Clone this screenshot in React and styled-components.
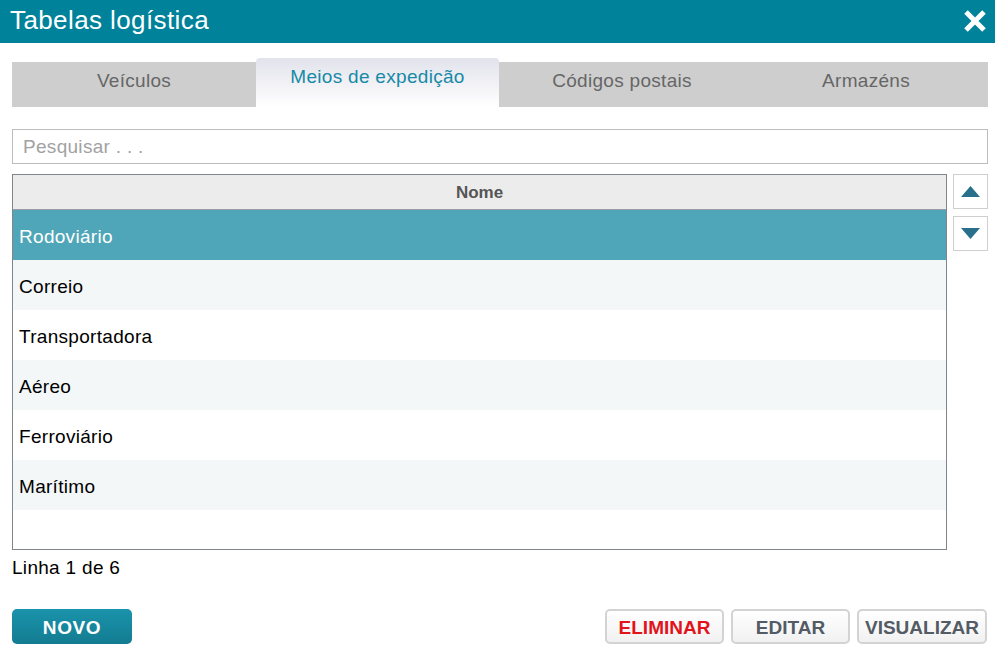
import React, { useState } from "react";
import styled, { createGlobalStyle } from "styled-components";

const GlobalStyle = createGlobalStyle`
  html, body {
    margin: 0;
    padding: 0;
    background: #ffffff;
  }
  body {
    font-family: "Liberation Sans", Arial, sans-serif;
    color: #000;
  }
  * { box-sizing: border-box; }
`;

const Dialog = styled.div`
  width: 995px;
  height: 656px;
  background: #fff;
  display: flex;
  flex-direction: column;
`;

const TitleBar = styled.header`
  height: 43px;
  flex: none;
  background: #00829a;
  display: flex;
  align-items: flex-start;
  justify-content: space-between;
  padding: 0 8px 0 10px;
`;

const Title = styled.h1`
  margin: 0;
  font-size: 26px;
  line-height: 40px;
  font-weight: 400;
  color: #fff;
  letter-spacing: 0.4px;
`;

const CloseButton = styled.button`
  margin-top: 9px;
  width: 24px;
  height: 24px;
  padding: 0;
  border: 0;
  background: none;
  cursor: pointer;
  display: flex;
  svg { display: block; }
`;

const Body = styled.div`
  flex: 1;
  display: flex;
  flex-direction: column;
  padding: 0 7px 0 12px;
`;

const TabBar = styled.nav`
  margin-top: 15px;
  height: 49px;
  display: grid;
  grid-template-columns: repeat(4, 1fr);
  align-items: end;
  background: linear-gradient(to bottom, transparent 4px, #cecece 4px);
`;

const Tab = styled.button`
  height: ${(p) => (p.$active ? "49px" : "45px")};
  border: 0;
  margin: 0 ${(p) => (p.$active ? "1px" : "0")} 0 0;
  padding: 8px 0 0;
  border-radius: ${(p) => (p.$active ? "4px 4px 0 0" : "0")};
  background: ${(p) =>
    p.$active ? "linear-gradient(to bottom, #e2e2ec 0%, #ffffff 100%)" : "#cecece"};
  color: ${(p) => (p.$active ? "#168aa6" : "#666666")};
  font-family: inherit;
  font-size: 19px;
  line-height: 22px;
  letter-spacing: 0.3px;
  align-self: end;
  display: flex;
  justify-content: center;
  align-items: flex-start;
  cursor: pointer;
`;

const Search = styled.input`
  margin-top: 22px;
  height: 35px;
  width: 100%;
  border: 1px solid #bdbdbd;
  padding: 0 10px;
  font-family: inherit;
  font-size: 19px;
  letter-spacing: 0.3px;
  color: #333;
  outline: none;
  &::placeholder { color: #a2a2a2; }
`;

const GridArea = styled.div`
  margin-top: 10px;
  display: flex;
  align-items: flex-start;
  gap: 6px;
`;

const Table = styled.div`
  width: 935px;
  height: 376px;
  border: 1px solid #80858c;
  display: flex;
  flex-direction: column;
  background: #fff;
`;

const HeadCell = styled.div`
  height: 35px;
  flex: none;
  padding-top: 2px;
  background: #ececec;
  border-bottom: 1px solid #9a9ea4;
  display: flex;
  align-items: center;
  justify-content: center;
  font-size: 17px;
  font-weight: 700;
  color: #555;
`;

const Row = styled.div`
  height: 50px;
  flex: none;
  display: flex;
  align-items: center;
  padding: 4px 0 0 6px;
  font-size: 19px;
  letter-spacing: 0.3px;
  cursor: pointer;
  background: ${(p) => (p.$selected ? "#4fa6b8" : p.$odd ? "#f3f7f8" : "#ffffff")};
  color: ${(p) => (p.$selected ? "#ffffff" : "#000000")};
`;

const Scroller = styled.div`
  display: flex;
  flex-direction: column;
  gap: 7px;
`;

const ScrollButton = styled.button`
  width: 35px;
  height: 35px;
  padding: 0;
  border: 1px solid #cfcfcf;
  background: #fff;
  display: flex;
  align-items: center;
  justify-content: center;
  cursor: pointer;
`;

const Status = styled.div`
  margin-top: 7px;
  font-size: 19px;
  line-height: 22px;
  letter-spacing: 0.3px;
`;

const Actions = styled.div`
  margin-top: 30px;
  margin-right: 1px;
  display: flex;
  align-items: center;
  gap: 7px;
`;

const Spacer = styled.div`
  flex: 1;
`;

const PrimaryButton = styled.button`
  width: 120px;
  height: 35px;
  border: 0;
  padding: 2px 0 0;
  border-radius: 5px;
  background: linear-gradient(to bottom, #1a93ab 0%, #137c91 100%);
  color: #fff;
  font-family: inherit;
  font-size: 19px;
  font-weight: 700;
  letter-spacing: 0.6px;
  cursor: pointer;
`;

const SecondaryButton = styled.button`
  min-width: 119px;
  height: 35px;
  padding: 2px 6px 0;
  border: 2px solid #d3d3d3;
  border-radius: 5px;
  background: linear-gradient(to bottom, #ffffff 0%, #f1f1f1 100%);
  color: ${(p) => (p.$danger ? "#e2141b" : "#535b64")};
  font-family: inherit;
  font-size: 19px;
  font-weight: 700;
  cursor: pointer;
`;

const tabs = ["Veículos", "Meios de expedição", "Códigos postais", "Armazéns"];
const rows = ["Rodoviário", "Correio", "Transportadora", "Aéreo", "Ferroviário", "Marítimo"];

export default function App() {
  const [tab, setTab] = useState(1);
  const [selected, setSelected] = useState(0);

  return (
    <>
      <GlobalStyle />
      <Dialog>
        <TitleBar>
          <Title>Tabelas logística</Title>
          <CloseButton aria-label="Fechar">
            <svg width="24" height="24" viewBox="0 0 24 24">
              <path d="M3 3 L21 21 M21 3 L3 21" stroke="#fff" strokeWidth="5" strokeLinecap="butt" />
            </svg>
          </CloseButton>
        </TitleBar>
        <Body>
          <TabBar>
            {tabs.map((t, i) => (
              <Tab key={t} $active={i === tab} onClick={() => setTab(i)}>
                {t}
              </Tab>
            ))}
          </TabBar>
          <Search placeholder="Pesquisar . . ." />
          <GridArea>
            <Table>
              <HeadCell>Nome</HeadCell>
              {rows.map((r, i) => (
                <Row key={r} $selected={i === selected} $odd={i % 2 === 1} onClick={() => setSelected(i)}>
                  {r}
                </Row>
              ))}
            </Table>
            <Scroller>
              <ScrollButton aria-label="Subir">
                <svg width="19" height="11" viewBox="0 0 19 11">
                  <path d="M9.5 0 L19 11 L0 11 Z" fill="#286f8c" />
                </svg>
              </ScrollButton>
              <ScrollButton aria-label="Descer">
                <svg width="19" height="11" viewBox="0 0 19 11">
                  <path d="M0 0 L19 0 L9.5 11 Z" fill="#286f8c" />
                </svg>
              </ScrollButton>
            </Scroller>
          </GridArea>
          <Status>Linha {selected + 1} de {rows.length}</Status>
          <Actions>
            <PrimaryButton>NOVO</PrimaryButton>
            <Spacer />
            <SecondaryButton $danger>ELIMINAR</SecondaryButton>
            <SecondaryButton>EDITAR</SecondaryButton>
            <SecondaryButton>VISUALIZAR</SecondaryButton>
          </Actions>
        </Body>
      </Dialog>
    </>
  );
}
